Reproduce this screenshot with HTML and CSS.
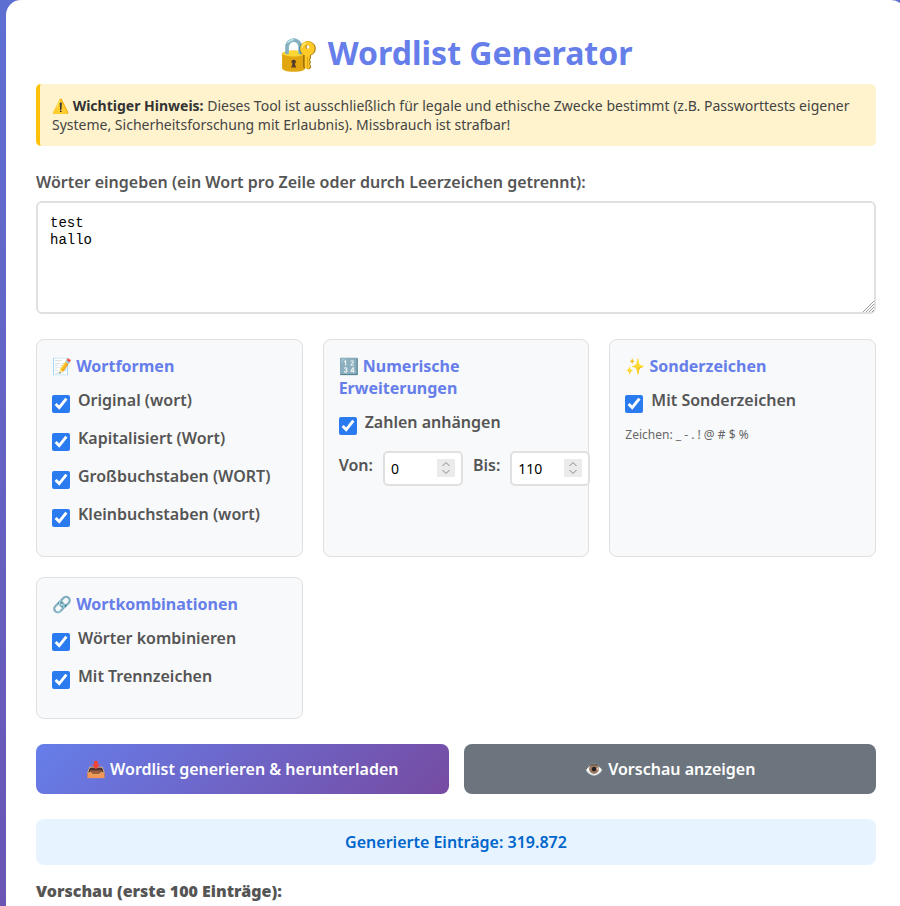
FILE: index.html
```html
<!DOCTYPE html>
<html lang="de">
<head>
    <meta charset="utf-8">
    <title>Wordlist Generator</title>
    <link rel="stylesheet" href="styles.css">
</head>
<body>
<div class="container">
    <h1>🔐 Wordlist Generator</h1>

    <div class="warning">
        ⚠️ <strong>Wichtiger Hinweis:</strong> Dieses Tool ist ausschließlich für legale und ethische Zwecke bestimmt (z.B. Passworttests eigener Systeme, Sicherheitsforschung mit Erlaubnis). Missbrauch ist strafbar!
    </div>

    <div class="form-group">
        <label class="main-label" for="words">Wörter eingeben (ein Wort pro Zeile oder durch Leerzeichen getrennt):</label>
        <textarea id="words">test
hallo</textarea>
    </div>

    <div class="options">
        <div class="option-group">
            <h3>📝 Wortformen</h3>
            <label class="check"><input type="checkbox" checked> <span>Original (wort)</span></label>
            <label class="check"><input type="checkbox" checked> <span>Kapitalisiert (Wort)</span></label>
            <label class="check"><input type="checkbox" checked> <span>Großbuchstaben (WORT)</span></label>
            <label class="check"><input type="checkbox" checked> <span>Kleinbuchstaben (wort)</span></label>
        </div>

        <div class="option-group">
            <h3>🔢 Numerische Erweiterungen</h3>
            <label class="check"><input type="checkbox" checked> <span>Zahlen anhängen</span></label>
            <div class="range">
                <label for="von">Von:</label>
                <input type="number" id="von" value="0">
                <label for="bis">Bis:</label>
                <input type="number" id="bis" value="110">
            </div>
        </div>

        <div class="option-group">
            <h3>✨ Sonderzeichen</h3>
            <label class="check"><input type="checkbox" checked> <span>Mit Sonderzeichen</span></label>
            <small>Zeichen: _ - . ! @ # $ %</small>
        </div>

        <div class="option-group">
            <h3>🔗 Wortkombinationen</h3>
            <label class="check"><input type="checkbox" checked> <span>Wörter kombinieren</span></label>
            <label class="check"><input type="checkbox" checked> <span>Mit Trennzeichen</span></label>
        </div>
    </div>

    <div class="buttons">
        <button class="btn btn-primary">📥 Wordlist generieren &amp; herunterladen</button>
        <button class="btn btn-secondary">👁️ Vorschau anzeigen</button>
    </div>

    <div class="stats">Generierte Einträge: 319.872</div>

    <div class="preview-title">Vorschau (erste 100 Einträge):</div>
</div>
</body>
</html>
```

FILE: styles.css
```css
html, body {
    margin: 0;
    height: 906px;
    overflow: hidden;
}

body {
    font-family: "Noto Sans", sans-serif;
    background: linear-gradient(180deg, #5e6fd2 0%, #6a55b4 100%);
    padding-left: 6px;
}

.container {
    box-sizing: border-box;
    width: 900px;
    height: 906px;
    padding: 31px 30px 0;
    background: white;
    border-radius: 15px 15px 0 0;
}

h1 {
    margin: 0 0 9px;
    text-align: center;
    color: #667eea;
    font-size: 32px;
    line-height: 44px;
}

.warning {
    background: #fff3cd;
    border-left: 4px solid #ffc107;
    border-radius: 5px;
    padding: 12px;
    font-size: 14px;
    line-height: 19px;
    color: #444;
    margin-bottom: 25px;
}

.warning strong {
    color: #333;
}

.form-group {
    margin-bottom: 25px;
}

.main-label {
    display: block;
    font-weight: 600;
    color: #555;
    font-size: 16px;
    line-height: 22px;
    margin-bottom: 8px;
}

textarea {
    display: block;
    box-sizing: border-box;
    width: 100%;
    height: 113px;
    padding: 12px;
    border: 2px solid #e0e0e0;
    border-radius: 6px;
    font-family: "Liberation Mono", monospace;
    font-size: 14px;
    line-height: 17px;
}

textarea::-webkit-resizer {
    background: url("data:image/svg+xml,%3Csvg xmlns='http://www.w3.org/2000/svg' width='15' height='15' stroke='%23999' fill='none'%3E%3Cpath d='M4 15L15 4M7 15L15 7M10 15L15 10M13 15L15 13'/%3E%3C/svg%3E");
}

.options {
    display: grid;
    grid-template-columns: repeat(3, 1fr);
    gap: 20px;
    margin-bottom: 25px;
}

.option-group {
    box-sizing: border-box;
    min-width: 0;
    background: #f8f9fa;
    border: 1px solid #e0e0e0;
    border-radius: 8px;
    padding: 15px;
}

.option-group h3 {
    margin: 0 0 12px;
    font-size: 16px;
    line-height: 22px;
    color: #667eea;
}

.check {
    display: flex;
    align-items: flex-start;
    gap: 8px;
    height: 22px;
    font-weight: 600;
    color: #555;
    font-size: 16px;
    line-height: 22px;
    margin-bottom: 16px;
}

.check input {
    width: 18px;
    height: 18px;
    margin: 6px 0 0;
    accent-color: #2b7bf0;
    flex: none;
}

.range {
    display: flex;
    align-items: flex-start;
    gap: 10px;
    margin-top: 18px;
    white-space: nowrap;
    font-weight: 600;
    color: #555;
    font-size: 16px;
    line-height: 22px;
}

.range label {
    margin-top: 3px;
}

.range input {
    box-sizing: border-box;
    width: 80px;
    height: 35px;
    padding: 6px;
    border: 2px solid #e0e0e0;
    border-radius: 5px;
    font-family: "Noto Sans", sans-serif;
    font-size: 14px;
    flex: none;
}

.range input::-webkit-inner-spin-button {
    -webkit-appearance: none;
    opacity: 1;
    width: 18px;
    height: 18px;
    background: #ebebeb url("data:image/svg+xml,%3Csvg xmlns='http://www.w3.org/2000/svg' width='18' height='18' stroke='%23888' fill='none'%3E%3Cpath d='M5.5 7L9 3.5L12.5 7M5.5 11L9 14.5L12.5 11'/%3E%3C/svg%3E");
}

small {
    display: block;
    font-size: 12px;
    line-height: 16px;
    color: #666;
}

.buttons {
    display: flex;
    gap: 15px;
    margin-bottom: 25px;
}

.btn {
    flex: 1;
    height: 50px;
    border: none;
    border-radius: 8px;
    font-family: "Noto Sans", sans-serif;
    font-size: 16px;
    font-weight: 600;
    color: white;
}

.btn-primary {
    background: linear-gradient(135deg, #667eea 0%, #764ba2 100%);
}

.btn-secondary {
    background: #6c757d;
}

.stats {
    background: #e7f3ff;
    border-radius: 8px;
    text-align: center;
    color: #0066cc;
    font-weight: 600;
    font-size: 16px;
    line-height: 22px;
    padding: 12px;
    margin-bottom: 15px;
}

.preview-title {
    font-weight: 900;
    color: #555;
    font-size: 16px;
    line-height: 22px;
}
```
